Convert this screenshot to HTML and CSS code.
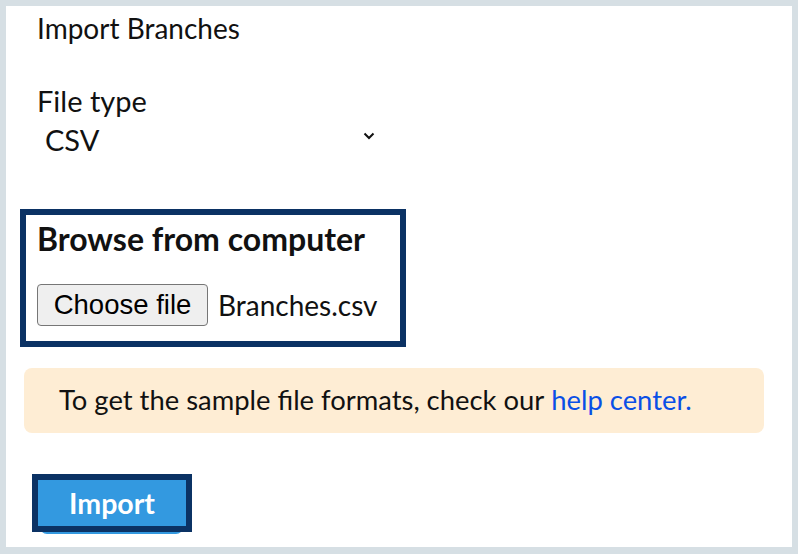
FILE: index.html
```html
<!DOCTYPE html>
<html>
<head>
<meta charset="utf-8">
<link rel="stylesheet" href="styles.css">
</head>
<body>
<div class="card">
  <div class="title">Import Branches</div>
  <div class="field">
    <div class="label">File type</div>
    <div class="select">
      <span class="select-value">CSV</span>
      <svg class="chevron" width="12" height="8" viewBox="0 0 12 8"><path d="M1.5 1.5 L6 6 L10.5 1.5" fill="none" stroke="#111" stroke-width="2"/></svg>
    </div>
  </div>
  <div class="browse">
    <div class="browse-title">Browse from computer</div>
    <div class="file-row">
      <button class="choose">Choose file</button>
      <span class="file-name">Branches.csv</span>
    </div>
  </div>
  <div class="note">To get the sample file formats, check our <a class="link" href="#">help center.</a></div>
  <div class="actions">
    <button class="import">Import</button>
  </div>
</div>
</body>
</html>
```
FILE: styles.css
```css
html, body {
  margin: 0;
  padding: 0;
}
body {
  background: #d6dfe4;
  font-family: Lato, "Noto Sans", sans-serif;
  color: #111;
  width: 798px;
  height: 554px;
  overflow: hidden;
}
.card {
  position: relative;
  z-index: 0;
  background: #fff;
  margin: 6px 6px 0 6px;
  height: 541px;
  box-sizing: border-box;
  padding: 6px 0 0 0;
  display: flex;
  flex-direction: column;
}
.title {
  font-size: 28px;
  line-height: 1.2;
  padding-left: 31px;
}
.field {
  margin-top: 38px;
  padding-left: 31px;
}
.label {
  font-size: 29px;
  line-height: 1.2;
}
.select {
  display: flex;
  align-items: center;
  width: 330px;
  padding-left: 8px;
  margin-top: 5px;
  font-size: 29px;
  line-height: 1.2;
}
.select-value {
  flex: 1;
}
.chevron {
  margin-top: -10px;
}
.browse {
  margin: 51px 0 0 14px;
  width: 386px;
  box-sizing: border-box;
  border: 6px solid #0b3264;
  padding: 5px 0 15px 11px;
}
.browse-title {
  font-size: 32px;
  font-weight: 700;
  line-height: 1.2;
}
.file-row {
  display: flex;
  align-items: center;
  margin-top: 25px;
}
.choose {
  font-family: "Liberation Sans", Arial, sans-serif;
  font-size: 27.5px;
  height: 42px;
  width: 171px;
  padding: 0;
  background: #efefef;
  border: 1px solid #767676;
  border-radius: 4px;
  color: #000;
}
.file-name {
  font-size: 28px;
  margin-left: 10px;
}
.note {
  margin: 21px 28px 0 18px;
  background: #feedd4;
  border-radius: 8px;
  height: 65px;
  display: flex;
  align-items: center;
  padding-left: 35px;
  font-size: 27.4px;
  line-height: 1.2;
  white-space: nowrap;
}
.link {
  color: #0a4fe6;
  text-decoration: none;
  margin-left: 7px;
}
.actions {
  margin-top: 47px;
  padding-left: 32px;
}
.import {
  position: relative;
  width: 148px;
  height: 46px;
  background: #3399e0;
  color: #fff;
  border: none;
  border-radius: 0;
  font-family: Lato, sans-serif;
  font-weight: 700;
  font-size: 28.5px;
  outline: 6px solid #0b3264;
  padding: 0;
}
.import::after {
  content: "";
  position: absolute;
  left: 2px;
  right: 3px;
  bottom: -8px;
  height: 12px;
  border-radius: 0 0 7px 7px;
  background: #3399e0;
  z-index: -1;
}
```
